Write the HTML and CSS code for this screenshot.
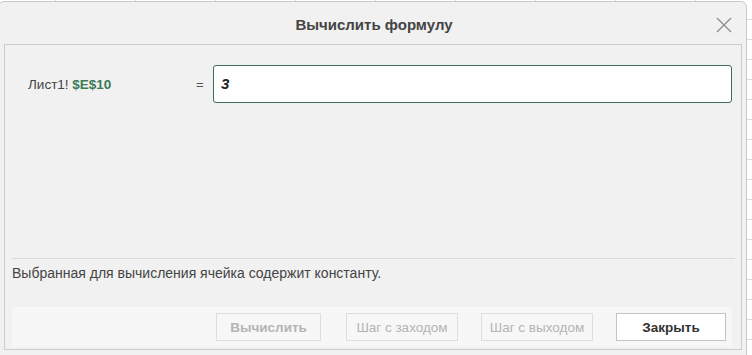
FILE: index.html
```html
<!DOCTYPE html>
<html lang="ru">
<head>
    <meta charset="UTF-8">
    <title>Вычислить формулу</title>
    <link rel="stylesheet" href="styles.css">
</head>
<body>

<!-- Окно диалога поверх листа -->
<div class="dialog">
    <div class="dialogHeader">
        <span class="dialogTitle">Вычислить формулу</span>
        <span class="closeBtn">
            <svg width="16" height="16" viewBox="0 0 16 16"><path d="M1 1 L15 15 M15 1 L1 15" stroke="#8a8a8a" stroke-width="1.2" fill="none"/></svg>
        </span>
    </div>

    <div class="dialogBody">
        <div class="formulaRow">
            <div class="refLabel">Лист1! <b class="cellRef">$E$10</b></div>
            <div class="eqSign">=</div>
            <div class="formulaBox">3</div>
        </div>

        <div class="infoText">Выбранная для вычисления ячейка содержит константу.</div>

        <div class="footer">
            <button class="btn btnBold btnFirst" disabled>Вычислить</button>
            <button class="btn" disabled>Шаг с заходом</button>
            <button class="btn" disabled>Шаг с выходом</button>
            <button class="btn btnBold btnActive">Закрыть</button>
        </div>
    </div>
</div>

</body>
</html>
```

FILE: styles.css
```css
body {
    margin: 0;
    padding: 0;
    font-family: Arial, "Liberation Sans", sans-serif;
    background-color: #fff;
    /* сетка листа за окном */
    background-image:
        repeating-linear-gradient(to right, transparent 0, transparent 55px, #dadada 55px, #dadada 56px, transparent 56px, transparent 80px),
        repeating-linear-gradient(to bottom, transparent 0, transparent 19px, #dadada 19px, #dadada 20px);
    overflow: hidden;
    height: 355px;
}

.dialog {
    width: 749px;
    height: 360px;
    margin-top: 1px;
    margin-left: -2px;
    background-color: #f1f1f1;
    border: 1px solid #c8c8c8;
    border-radius: 6px 6px 0 0;
    box-sizing: border-box;
    display: flex;
    flex-direction: column;
}

.dialogHeader {
    height: 42px;
    display: flex;
    align-items: center;
    justify-content: center;
    position: relative;
}

.dialogTitle {
    font-size: 15px;
    font-weight: bold;
    color: #444;
    margin-left: 3px;
    margin-top: 2px;
}

.closeBtn {
    position: absolute;
    right: 14px;
    top: 15px;
    width: 16px;
    height: 16px;
}

.dialogBody {
    margin: 0 4px 0 5px;
    height: 306px;
    border: 1px solid #cdcdcd;
    box-sizing: border-box;
    display: flex;
    flex-direction: column;
    padding: 0 7px 2px 7px;
}

.formulaRow {
    display: flex;
    align-items: center;
    padding-top: 10px;
    height: 58px;
    box-sizing: content-box;
    border-bottom: 1px solid #d9d9d9;
    padding-bottom: 145px;
    margin: 0 -1px 0 0;
}

.refLabel {
    width: 168px;
    padding-left: 16px;
    font-size: 13.5px;
    color: #444;
}

.cellRef {
    color: #3c7a56;
}

.eqSign {
    width: 17px;
    font-size: 13px;
    color: #555;
}

.formulaBox {
    flex: 1;
    height: 38px;
    box-sizing: border-box;
    margin-right: 3px;
    border: 1px solid #3f6d54;
    border-radius: 3px;
    background-color: #fff;
    font-size: 15px;
    font-weight: bold;
    font-style: italic;
    color: #222;
    padding: 9px 0 0 7px;
}

.infoText {
    font-size: 14px;
    color: #444;
    padding-top: 6px;
    height: 48px;
    box-sizing: border-box;
}

.footer {
    background-color: #f7f7f7;
    height: 40px;
    display: flex;
    align-items: center;
    justify-content: flex-end;
    gap: 23px;
    padding-right: 6px;
    margin-right: 2px;
}

.btn {
    height: 28px;
    padding: 0;
    width: 112px;
    font-family: Arial, "Liberation Sans", sans-serif;
    font-size: 13.5px;
    background-color: #f7f7f7;
    border: 1px solid #dedede;
    color: #b4b4b4;
}

.btnBold {
    font-weight: bold;
    width: 105px;
}

.btnFirst {
    margin-right: 2px;
}

.btnActive {
    width: 110px;
    background-color: #fff;
    border: 1px solid #c4c4c4;
    color: #333;
}
```
